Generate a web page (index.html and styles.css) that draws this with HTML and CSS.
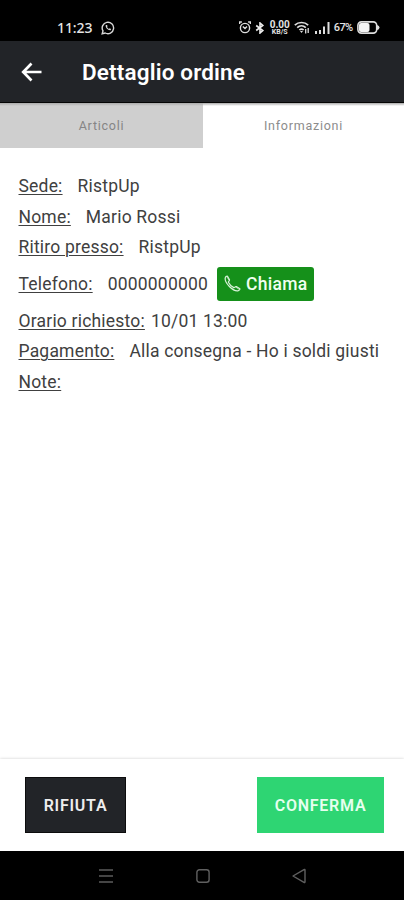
FILE: index.html
```html
<!DOCTYPE html>
<html lang="it">
<head>
<meta charset="utf-8">
<meta name="viewport" content="width=device-width, initial-scale=1">
<title>Dettaglio ordine</title>
<link rel="stylesheet" href="styles.css">
</head>
<body>
<div class="screen">
  <div class="status">
    <span class="clock">11:23</span>
    <svg class="whatsapp" width="14" height="14" viewBox="0 0 14 14" fill="none" stroke="#d8d8d8" stroke-width="1.4"><path d="M1.2 12.8 2 9.9A5.7 5.7 0 1 1 4.2 12z"/><path d="M4.8 4.1c-.8 2.3 2.2 5.6 4.8 5.1l.5-1.2-1.5-.8-.7.7C7 7.500 6.300 6.800 6 6l.6-.7-.6-1.400z" fill="#d8d8d8" stroke="none"/></svg>
    <div class="indicators">
      <svg width="12" height="13" viewBox="0 0 12 13" fill="none" stroke="#ddd" stroke-width="1.400"><circle cx="6" cy="7" r="4.600"/><path d="M.6 3V1h2.300M11.400 3V1H9.100M3.800 5.600 6 7.600l2-2"/></svg>
      <svg width="10" height="12" viewBox="0 0 10 12" fill="none" stroke="#eee" stroke-width="1.600"><path d="m1.200 3.500 6.600 5L5 11V1l2.800 2.500-6.600 5"/></svg>
      <div class="speed"><span>0.00</span><span class="unit">KB/S</span></div>
      <svg width="16" height="14" viewBox="0 0 16 14" fill="none" stroke="#ddd" stroke-width="1.700"><path d="M.8 4.200C4.500.6 10.500.6 14.200 4.200M3.200 6.600c2.500-2.400 6.100-2.400 8.600 0M5.400 9c1.300-1.200 2.900-1.200 4.200 0"/><path d="m6 10 1.500 2L9 10z" fill="#ddd" stroke="none"/><path d="M11.700 12.500V8M14.200 7v5" stroke-width="1.300"/></svg>
      <svg width="15" height="12" viewBox="0 0 15 12" fill="#ddd"><path d="M0 9h2v3H0zM4 8h2v4H4zM8 4.500h2V12H8zM12.500 0h2v12h-2z"/></svg>
      <span class="percent">67%</span>
      <svg width="23" height="13" viewBox="0 0 23 13"><rect x=".9" y=".9" width="18.800" height="11.200" rx="3.500" fill="none" stroke="#ddd" stroke-width="1.600"/><rect x="2" y="2" width="10.500" height="9" rx="2" fill="#f4f4f4"/><path d="M20 4q2.500.5 2.500 2.500T20 9z" fill="#ddd"/></svg>
    </div>
  </div>
  <header class="appbar">
    <svg class="back" width="22" height="20" viewBox="0 0 22 20" fill="none" stroke="#fff" stroke-width="2.700"><path d="M20.500 10H2.500M10.500 1.500 2.200 10l8.300 8.500"/></svg>
    <h1>Dettaglio ordine</h1>
  </header>
  <nav class="tabs">
    <div class="tab inactive">Articoli</div>
    <div class="tab">Informazioni</div>
  </nav>
  <main class="details">
    <div class="row"><span class="label">Sede:</span><span class="value">RistpUp</span></div>
    <div class="row"><span class="label">Nome:</span><span class="value">Mario Rossi</span></div>
    <div class="row"><span class="label">Ritiro presso:</span><span class="value">RistpUp</span></div>
    <div class="row phone"><span class="label">Telefono:</span><span class="value number">0000000000</span>
      <button class="call"><svg width="17" height="17" viewBox="0 0 17 17" fill="none" stroke="#d9f2d9" stroke-width="1.200" stroke-linejoin="round"><path d="M1.200 3.200C.5 8 8.800 16.300 13.800 15.800c1.400-.3 2.300-1.300 2.100-2.100l-3.600-2.100c-1.200-.3-1.600 1.100-2.500 1-1.600-.8-4.600-3.700-5.400-5.400-.1-1 1.200-1.300 1.100-2.300L3.500 1.200c-.9-.5-2.200.8-2.300 2z"/><path d="m3 2 2.200 3.500M11.600 12l3.500 2.300" stroke-width=".7"/></svg>Chiama</button>
    </div>
    <div class="row near"><span class="label">Orario richiesto:</span><span class="value">10/01 13:00</span></div>
    <div class="row"><span class="label">Pagamento:</span><span class="value">Alla consegna - Ho i soldi giusti</span></div>
    <div class="row"><span class="label">Note:</span></div>
  </main>
  <footer class="actions">
    <button class="action reject">RIFIUTA</button>
    <button class="action confirm">CONFERMA</button>
  </footer>
  <div class="navbar">
    <svg width="14" height="16" viewBox="0 0 14 16" stroke="#5c5c5c" stroke-width="1.600"><path d="M0 2h14M0 8h14M0 14h14"/></svg>
    <svg width="14" height="16" viewBox="0 0 14 16" fill="none" stroke="#606060" stroke-width="1.400"><rect x=".9" y="1.700" width="12.200" height="12.600" rx="2.500"/></svg>
    <svg width="14" height="16" viewBox="0 0 14 16" fill="none" stroke="#606060" stroke-width="1.400" stroke-linejoin="round"><path d="M13 2v12q-.2.800-1 .4L1 8l11-6.400q.8-.4 1 .4z"/></svg>
  </div>
</div>
</body>
</html>
```
FILE: styles.css
```css
* { box-sizing: border-box; }
body {
  margin: 0;
  background: #fff;
  font-family: Roboto, "Liberation Sans", sans-serif;
}
button { border: 0; font-family: inherit; }
svg { display: block; flex: none; }
.screen {
  width: 404px;
  height: 900px;
  display: flex;
  flex-direction: column;
}
.status {
  height: 41px;
  flex: none;
  padding: 14px 24px 0 57px;
  background: #000;
  color: #e4e4e4;
  display: flex;
  align-items: center;
}
.clock {
  width: 44px;
  font: 500 14px/26px "Noto Sans", sans-serif;
  letter-spacing: -.1px;
}
.indicators {
  margin-left: auto;
  display: flex;
  align-items: center;
  gap: 4.2px;
}
.speed {
  width: 21px;
  display: flex;
  flex-direction: column;
  align-items: center;
  font-size: 10px;
  font-weight: 700;
  line-height: 9px;
}
.speed .unit { font-size: 7px; line-height: 7px; }
.percent {
  width: 19px;
  font-size: 11px;
  font-weight: 500;
  letter-spacing: -.6px;
}
.appbar {
  height: 62px;
  flex: none;
  padding: 1px 0 0 21px;
  display: flex;
  align-items: center;
  gap: 39px;
  background: #222428;
  border-bottom: 1px solid #050505;
  color: #fff;
}
h1 { margin: 0; font-size: 22.5px; line-height: 28px; font-weight: 600; letter-spacing: .15px; }
.tabs {
  height: 45px;
  flex: none;
  display: grid;
  grid-template-columns: 203px 201px;
  background: linear-gradient(#aaa, #fff 3px);
}
.tab {
  display: flex;
  align-items: center;
  justify-content: center;
  font-size: 12.5px;
  letter-spacing: .75px;
  color: #8c8c8c;
}
.inactive { background: linear-gradient(#aaa, #cfcfcf 3px); color: #858585; }
.details {
  flex: 1;
  padding: 23px 19px 0 18.5px;
  color: #404040;
  font-size: 17.5px;
  letter-spacing: .2px;
}
.row {
  height: 30.4px;
  display: flex;
  align-items: center;
  gap: 15px;
  white-space: nowrap;
}
.label {
  text-decoration: underline;
  text-decoration-thickness: 1px;
  text-underline-offset: 2px;
}
.phone { height: 43.5px; }
.near { gap: 6px; }
.call {
  width: 97px;
  height: 34px;
  margin-left: -6px;
  padding: 0 0 0 7px;
  border-radius: 3px;
  background: #15901a;
  color: #f0fff0;
  display: flex;
  align-items: center;
  gap: 5px;
  font-size: 17.5px;
  font-weight: 500;
  letter-spacing: .3px;
}
.actions {
  height: 92px;
  flex: none;
  padding: 18px 20px 0 25px;
  display: flex;
  align-items: flex-start;
  justify-content: space-between;
  background: #fff;
  box-shadow: 0 0 3px #ccc;
}
.action {
  height: 56px;
  padding: 0;
  font-size: 16px;
  font-weight: 600;
  letter-spacing: .75px;
  color: #eee;
}
.reject { width: 101px; background: #222428; border: 1px solid #0c0c0d; }
.confirm { width: 127px; background: #2ed573; color: #e6ffef; }
.navbar {
  height: 49px;
  flex: none;
  position: relative;
  padding: 0 98px 0 99px;
  display: flex;
  align-items: center;
  justify-content: space-between;
  background: #000;
}
```
